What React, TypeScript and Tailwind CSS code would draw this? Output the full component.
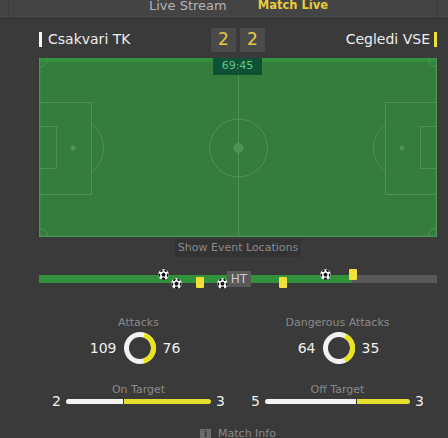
function Ball({ className }: { className: string }) {
  return (
    <svg viewBox="0 0 11 11" className={"absolute h-[11px] w-[11px] " + className}>
      <circle cx="5.5" cy="5.5" r="5.2" fill="#fff" />
      <path d="M5.5 3.4 7.6 5 6.8 7.4H4.2L3.4 5Z" fill="#111" />
      <path d="M3.2 .6 5 1.5 3.8 3 1.8 2.8ZM7.8 .6 6 1.5 7.2 3 9.2 2.8ZM.3 5.5 1.6 4.2 2.4 6.4 1.2 8.2ZM10.7 5.5 9.4 4.2 8.6 6.4 9.8 8.2ZM3.4 10.4 4.4 8.6H6.6L7.6 10.4 5.5 10.9Z" fill="#111" />
    </svg>
  );
}

function Card({ className }: { className: string }) {
  return <div className={"absolute h-[11px] w-[8px] rounded-[1px] bg-[#f2e03a] " + className} />;
}

function Ring({ yellow }: { yellow: number }) {
  const c = 2 * Math.PI * 13.5;
  return (
    <svg viewBox="0 0 34 34" className="h-[34px] w-[34px]">
      <circle cx="17" cy="17" r="13.5" fill="none" stroke="#f2f2f2" strokeWidth="5" />
      {/* yellow share sits centred on the right side */}
      <circle cx="17" cy="17" r="13.5" fill="none" stroke="#e8e41c" strokeWidth="5" strokeDasharray={`${c * yellow} ${c * (1 - yellow)}`} strokeDashoffset={(c * yellow) / 2} />
    </svg>
  );
}

function Donut({ label, a, b, yellow }: { label: string; a: number; b: number; yellow: number }) {
  return (
    <div className="flex flex-col items-center">
      <div className="text-[11px] leading-[14px] text-[#8a8a8a]">{label}</div>
      <div className="mt-[1px] grid w-full grid-cols-[1fr_auto_1fr] items-center gap-[6px] pl-[2px] text-[14px] text-[#f0f0f0]">
        <span className="text-right">{a}</span>
        <Ring yellow={yellow} />
        <span>{b}</span>
      </div>
    </div>
  );
}

function Bar({ label, a, b, white, yellow }: { label: string; a: number; b: number; white: string; yellow: string }) {
  return (
    <div className="flex flex-col items-center">
      <div className="text-[11px] leading-[9px] text-[#8a8a8a]">{label}</div>
      <div className="grid w-full grid-cols-[1fr_auto_1fr] items-center gap-[5px] text-[14px] leading-[14px] text-[#f0f0f0]">
        <span className="text-right">{a}</span>
        <div className="flex h-[5px] items-stretch">
          <div className={"rounded-l-full bg-[#f4f4f4] " + white} />
          <div className={"rounded-r-full border-l border-[#333] bg-[#e3df2c] " + yellow} />
        </div>
        <span>{b}</span>
      </div>
    </div>
  );
}

function Pitch() {
  return (
    <svg viewBox="0 0 398 179" className="h-full w-full" fill="none" stroke="#4f9257" strokeWidth="1">
      <path d="M0.5 0V179M397.5 0V179M0 178.5H398" strokeWidth="1.5" />
      <path d="M199.5 0V179" />
      <circle cx="199.5" cy="90" r="29" />
      <circle cx="199.5" cy="90" r="5" fill="#4f9257" stroke="none" />
      <path d="M0 44.5H52.5V136.5H0M0 68.5H17.5V110.5H0" />
      <path d="M52.5 66A30 30 0 0 1 52.5 114" />
      <circle cx="34" cy="90" r="2.5" fill="#4f9257" stroke="none" />
      <path d="M398 44.5H346.5V136.5H398M398 68.5H381.5V110.5H398" />
      <path d="M346.5 66A30 30 0 0 0 346.5 114" />
      <circle cx="363" cy="90" r="2.5" fill="#4f9257" stroke="none" />
      <path d="M0 9A9 9 0 0 0 9 0M398 9A9 9 0 0 1 389 0M0 170A9 9 0 0 1 9 179M398 170A9 9 0 0 0 389 179" />
    </svg>
  );
}

export default function App() {
  return (
    <div className="h-[438px] w-[448px] overflow-hidden bg-[#3a3a3a] font-['DejaVu_Sans',sans-serif]">
      <div className="flex h-[19px] border-b border-[#2f2f2f] bg-[#444444]">
        <div className="w-[9px] border-r border-[#3a3a3a]" />
        <div className="flex flex-1 justify-center gap-[31px] pl-[31px] leading-[11px]">
          <span className="text-[13px] text-[#b5b5b5]">Live Stream</span>
          <span className="text-[11.5px] font-bold text-[#e8cc3a]">Match Live</span>
        </div>
        <div className="w-[11px] border-l border-[#3a3a3a]" />
      </div>

      <div className="ml-[39px] mr-[11px] mt-[8px] flex h-[25px] items-center text-[14px] text-[#eeeeee]">
        <div className="flex flex-1 items-center gap-[6px]">
          <div className="h-[15px] w-[3px] bg-[#f4f4f4]" />
          <span>Csakvari TK</span>
        </div>
        <div className="flex items-center gap-[4px] text-[#e8c93a]">
          <div className="flex h-[24px] w-[25px] items-center justify-center bg-[#4a4a4a] text-[17px]">2</div>
          <div className="flex h-[24px] w-[25px] items-center justify-center bg-[#4a4a4a] text-[17px]">2</div>
        </div>
        <div className="flex flex-1 items-center justify-end gap-[4px]">
          <span>Cegledi VSE</span>
          <div className="h-[15px] w-[3px] bg-[#f2e03a]" />
        </div>
      </div>

      <div className="relative ml-[39px] mr-[11px] mt-[6px] h-[179px] border-t-[4px] border-[#33913c] bg-[#347d3c]">
        <div className="absolute -top-[4px] left-0 h-[179px] w-full">
          <Pitch />
        </div>
        <div className="absolute -top-[4px] left-[174px] flex h-[17px] w-[49px] items-center justify-center bg-[#0d5234] text-[11px] text-[#62c48c]">
          69:45
        </div>
      </div>

      <div className="ml-[39px] mr-[11px] mt-[2px] flex justify-center">
        <div className="flex h-[18px] items-center bg-[#333333] px-[3px] text-[11px] text-[#8a8a8a]">Show Event Locations</div>
      </div>

      <div className="relative ml-[39px] mr-[11px] mt-[18px] h-[8px] bg-[#595959]">
        <div className="h-full w-[313px] bg-[#33913c]" />
        <Ball className="left-[119px] -top-[6px]" />
        <Ball className="left-[132px] top-[3px]" />
        <Card className="left-[157px] top-[2px]" />
        <Ball className="left-[178px] top-[3px]" />
        <div className="absolute left-[188px] -top-[4px] flex h-[16px] w-[24px] items-center justify-center bg-[#595959] text-[12px] text-[#cccccc]">HT</div>
        <Card className="left-[240px] top-[2px]" />
        <Ball className="left-[281px] -top-[6px]" />
        <Card className="left-[310px] -top-[6px]" />
      </div>

      <div className="ml-[39px] mr-[11px] mt-[33px] grid grid-cols-2">
        <Donut label="Attacks" a={109} b={76} yellow={0.41} />
        <Donut label="Dangerous Attacks" a={64} b={35} yellow={0.354} />
      </div>

      <div className="ml-[39px] mr-[11px] mt-[20px] grid grid-cols-2">
        <Bar label="On Target" a={2} b={3} white="w-[57px]" yellow="w-[88px]" />
        <Bar label="Off Target" a={5} b={3} white="w-[91px]" yellow="w-[54px]" />
      </div>

      <div className="ml-[39px] mr-[11px] mt-[20px] flex items-center justify-center gap-[7px] text-[11px] leading-[12px] text-[#8a8a8a]">
        <span className="flex h-[11px] w-[11px] items-center justify-center bg-[#6b6b6b] text-[9px] font-bold text-[#333]">i</span>
        <span>Match Info</span>
      </div>
    </div>
  );
}
